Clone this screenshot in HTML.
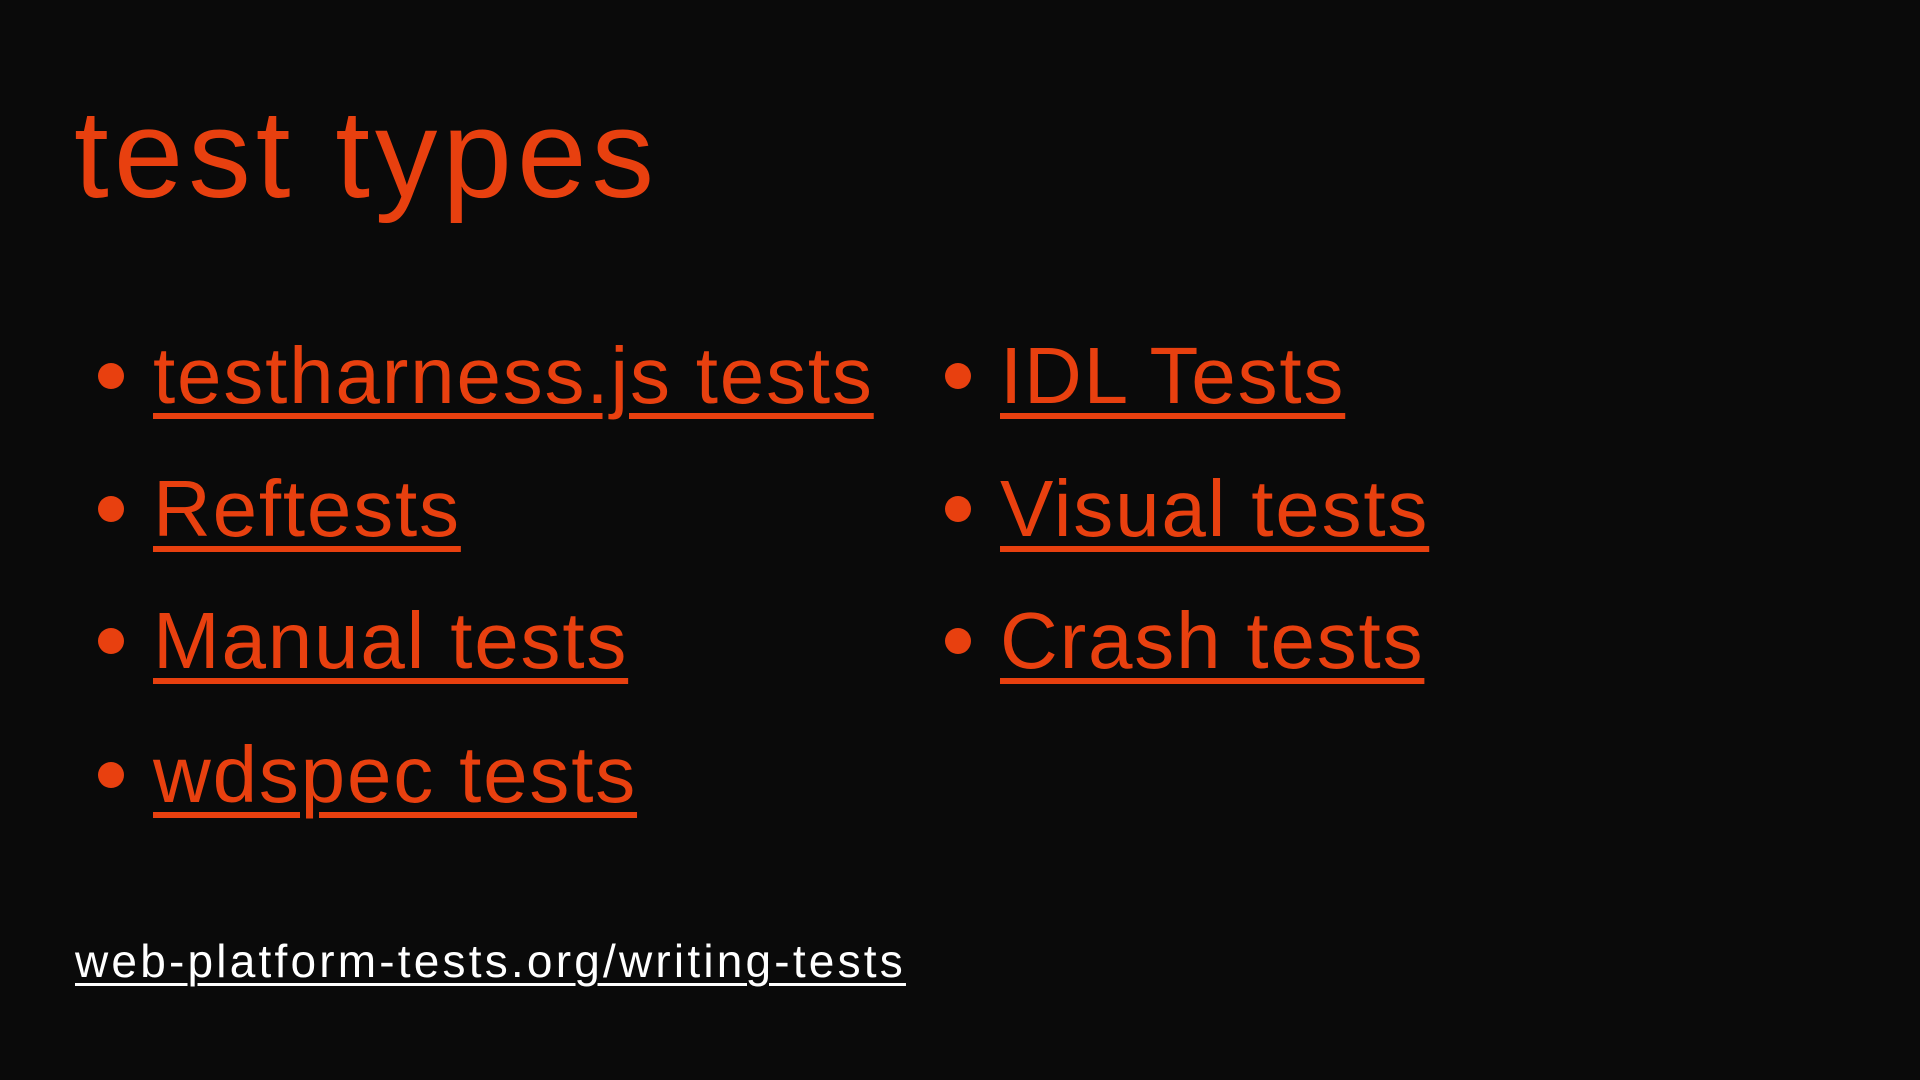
<!DOCTYPE html>
<html><head><meta charset="utf-8"><style>
html,body{margin:0;padding:0;background:#0a0a0a;width:1920px;height:1080px;overflow:hidden}
body{position:relative;font-family:"Liberation Sans",sans-serif}
.t{position:absolute;line-height:1;white-space:nowrap}
.title{left:74px;top:92px;font-size:125px;color:#e8400f;letter-spacing:5px}
.b{font-size:80px;color:#e8400f;text-decoration:underline;text-decoration-thickness:6px;text-underline-offset:10px;letter-spacing:1.8px}
.dot{position:absolute;width:26px;height:26px;border-radius:50%;background:#e8400f}
.f{left:75px;top:938px;font-size:46px;color:#fff;text-decoration:underline;text-decoration-thickness:3px;text-underline-offset:6px;letter-spacing:3.2px}
</style></head><body>
<div class="t title">test types</div>

<div class="dot" style="left:98px;top:363px"></div>
<div class="t b" style="left:153px;top:336px">testharness.js tests</div>
<div class="dot" style="left:98px;top:496px"></div>
<div class="t b" style="left:153px;top:469px">Reftests</div>
<div class="dot" style="left:98px;top:628px"></div>
<div class="t b" style="left:153px;top:601px">Manual tests</div>
<div class="dot" style="left:98px;top:762px"></div>
<div class="t b" style="left:153px;top:735px">wdspec tests</div>

<div class="dot" style="left:945px;top:363px"></div>
<div class="t b" style="left:1000px;top:336px">IDL Tests</div>
<div class="dot" style="left:945px;top:496px"></div>
<div class="t b" style="left:1000px;top:469px">Visual tests</div>
<div class="dot" style="left:945px;top:628px"></div>
<div class="t b" style="left:1000px;top:601px">Crash tests</div>

<div class="t f">web-platform-tests.org/writing-tests</div>
</body></html>
